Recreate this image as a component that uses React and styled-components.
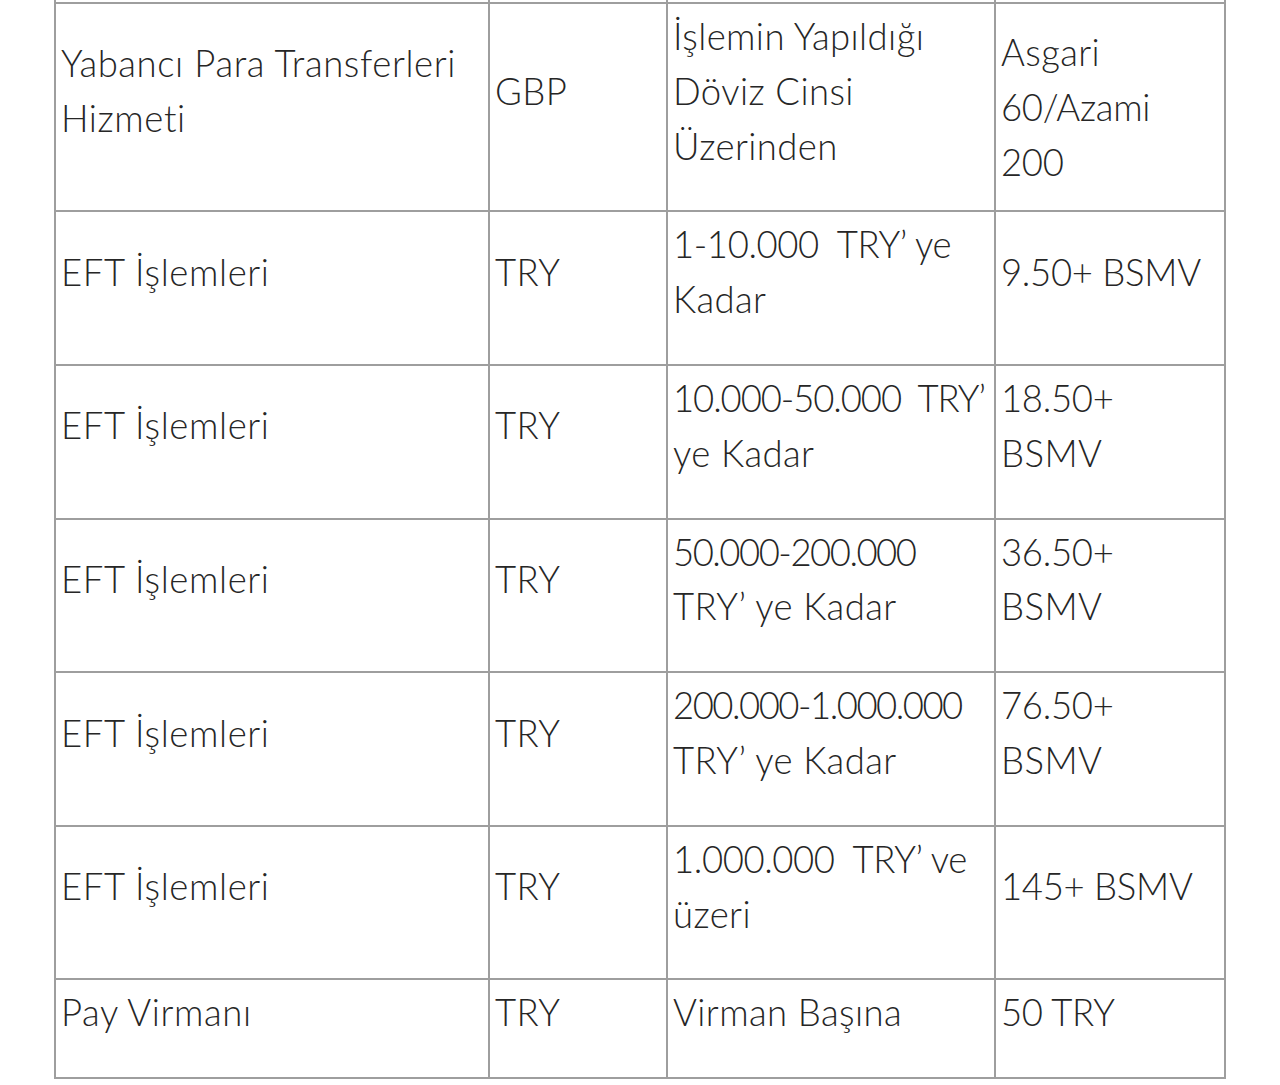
import styled, { createGlobalStyle } from "styled-components";

const GlobalStyle = createGlobalStyle`
  html, body {
    margin: 0;
    padding: 0;
    background: #ffffff;
  }
`;

// each cell is a list of the lines it wraps into
const rows = [
  [["Yabancı Para Transferleri", "Hizmeti"], ["GBP"], ["İşlemin Yapıldığı", "Döviz Cinsi", "Üzerinden"], ["Asgari", "60/Azami", "200"]],
  [["EFT İşlemleri"], ["TRY"], ["1-10.000\u00a0 TRY’ ye", "Kadar"], ["9.50+ BSMV"]],
  [["EFT İşlemleri"], ["TRY"], ["10.000-50.000\u00a0 TRY’", "ye Kadar"], ["18.50+", "BSMV"]],
  [["EFT İşlemleri"], ["TRY"], ["50.000-200.000", "TRY’ ye Kadar"], ["36.50+", "BSMV"]],
  [["EFT İşlemleri"], ["TRY"], ["200.000-1.000.000", "TRY’ ye Kadar"], ["76.50+", "BSMV"]],
  [["EFT İşlemleri"], ["TRY"], ["1.000.000\u00a0 TRY’ ve", "üzeri"], ["145+ BSMV"]],
  [["Pay Virmanı"], ["TRY"], ["Virman Başına"], ["50 TRY"]],
];

// the numbers in the reference set a little tighter than the words
const tracking = (col, line) => {
  if (!/\d/.test(line)) return col === 0 ? 0.6 : 0.4;
  if (col !== 2) return -0.3;
  if (!/[A-Za-z]/.test(line)) return -1.5;
  return line.length > 18 ? -1.1 : -0.4;
};

const Page = styled.div`
  padding: 0 56px 5px 54px;
  font-family: Lato, "Open Sans", sans-serif;
  color: #262626;
`;

const FeeTable = styled.table`
  width: 1170px;
  border-collapse: collapse;
  table-layout: fixed;
`;

const Cell = styled.td`
  border: 2px solid #9e9e9e;
  padding: 5px 5px;
  vertical-align: middle;
  font-size: 36.5px;
  line-height: 54.8px;
  font-weight: 300;
`;

const StubCell = styled.td`
  border: 2px solid #9e9e9e;
  border-top: none;
  height: 2px;
  padding: 0;
`;

const Text = styled.p`
  margin: 0 0 ${(p) => (p.$flush ? "0" : "32px")};
`;

const Line = styled.span`
  display: block;
  white-space: nowrap;
  letter-spacing: ${(p) => p.$track}px;
`;

export default function App() {
  return (
    <>
      <GlobalStyle />
      <Page>
        <FeeTable>
          <colgroup>
            <col style={{ width: 434 }} />
            <col style={{ width: 178 }} />
            <col style={{ width: 328 }} />
            <col style={{ width: 230 }} />
          </colgroup>
          <tbody>
            <tr>
              <StubCell />
              <StubCell />
              <StubCell />
              <StubCell />
            </tr>
            {rows.map((row, i) => (
              <tr key={i}>
                {row.map((lines, j) => (
                  <Cell key={j}>
                    <Text $flush={i === 0 && j === 3}>
                      {lines.map((line, k) => (
                        <Line key={k} $track={tracking(j, line)}>
                          {line}
                        </Line>
                      ))}
                    </Text>
                  </Cell>
                ))}
              </tr>
            ))}
          </tbody>
        </FeeTable>
      </Page>
    </>
  );
}
